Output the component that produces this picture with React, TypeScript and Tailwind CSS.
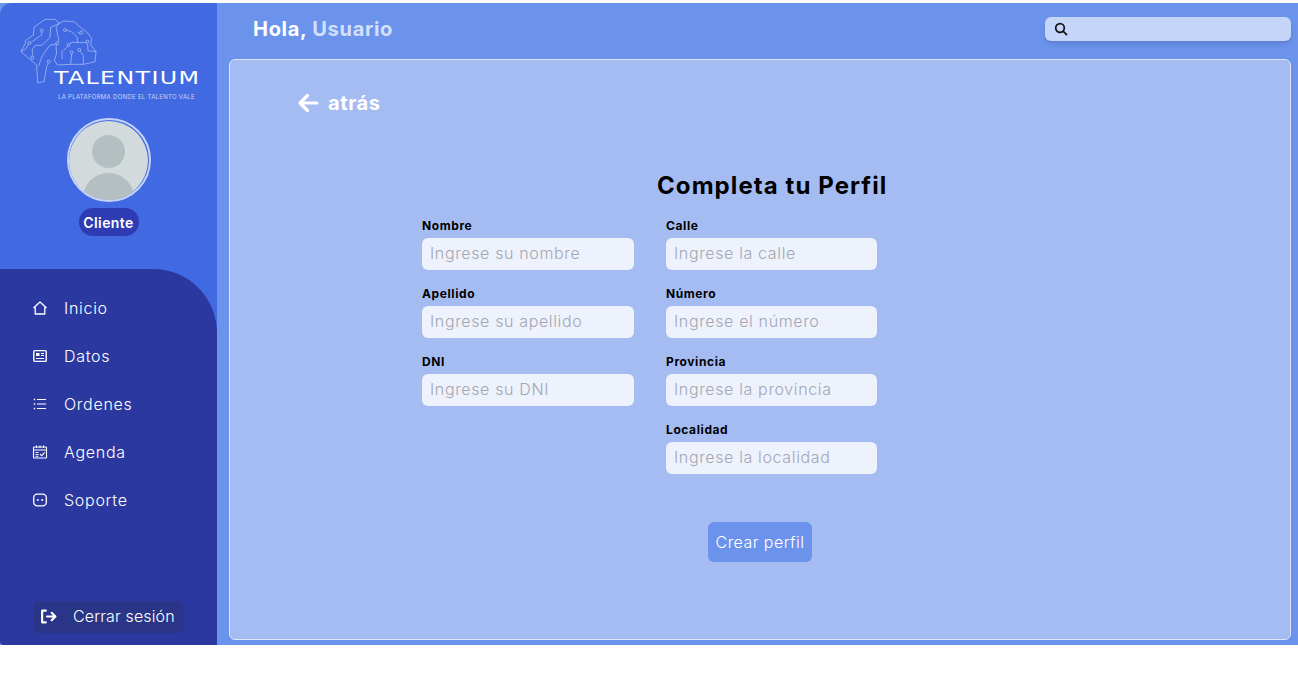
import { useState } from "react";

const font = { fontFamily: "Inter, 'Liberation Sans', sans-serif" };

function Brain() {
  return (
    <svg width="110" height="100" viewBox="0 0 330 300" fill="none" stroke="#d5e1fb" strokeWidth="1.6" strokeLinejoin="round" className="block">
      {/* contorno del lóbulo izquierdo y tallo */}
      <path d="M140 170 L132 215 L113 218 L110 165 L63 125 L76 100 L76 92 L100 75 L102 52 L135 28 L165 28 L178 40 L152 52 L150 82 L126 106 L106 106 L97 118 L97 140" />
      {/* contorno del lóbulo derecho */}
      <path d="M178 40 L190 33 L222 35 L245 55 L262 68 L275 85 L272 105 L288 125 L285 155 L265 160 L250 163 L212 163 L172 165 L163 150 L170 130 L168 110 L176 88 L168 52 L178 40" />
      {/* pistas internas */}
      <path d="M125 66 L125 74 L106 88 L94 96 M86 102 L76 118 L63 125" />
      <path d="M168 102 L150 106 L135 125 L125 142 L116 168" />
      <path d="M145 160 L140 170" />
      <path d="M199 60 L215 66 L232 82 L232 98 L262 98 M240 72 L232 66" />
      <path d="M207 104 L216 96 L232 98 M263 100 L264 122 L288 125" />
      <path d="M215 132 L212 163 M240 124 L250 136 L250 163 M190 122 L205 108 M186 122 L186 148" />
      <g fill="#4169e1">
        <circle cx="125" cy="62" r="4.5" />
        <circle cx="88" cy="99" r="4.5" />
        <circle cx="97" cy="143" r="4.5" />
        <circle cx="172" cy="100" r="4.5" />
        <circle cx="146" cy="155" r="4.5" />
        <circle cx="195" cy="60" r="4.5" />
        <circle cx="244" cy="68" r="4.5" />
        <circle cx="262" cy="95" r="4.5" />
        <circle cx="205" cy="105" r="4.5" />
        <circle cx="215" cy="127" r="4.5" />
        <circle cx="238" cy="120" r="4.5" />
      </g>
    </svg>
  );
}

function IconHome() {
  return (
    <svg width="16" height="16" viewBox="0 0 16 16" fill="none" stroke="white" strokeWidth="1.3">
      <path d="M1.5 8 L8 2 L14.5 8 M3.2 7 V14 H12.8 V7" strokeLinejoin="round" />
    </svg>
  );
}
function IconDatos() {
  return (
    <svg width="16" height="16" viewBox="0 0 16 16" fill="none" stroke="white">
      <rect x="1.8" y="2.6" width="12.4" height="10.8" rx="1" strokeWidth="1.4" />
      <rect x="4" y="5" width="3.5" height="3" fill="white" stroke="none" />
      <path d="M9 5.5 H12 M9 7.5 H12 M4 10.5 H12" strokeWidth="1" />
    </svg>
  );
}
function IconLista() {
  return (
    <svg width="16" height="16" viewBox="0 0 16 16" fill="none" stroke="white" strokeWidth="1.2">
      <path d="M5 3.5 H14 M5 8 H14 M5 12.5 H14" />
      <path d="M1.8 3.5 H3.2 M1.8 8 H3.2 M1.8 12.5 H3.2" strokeWidth="1.6" />
    </svg>
  );
}
function IconAgenda() {
  return (
    <svg width="16" height="16" viewBox="0 0 16 16" fill="none" stroke="white" strokeWidth="1.1">
      <rect x="1.5" y="3" width="13" height="11" rx="0.6" />
      <path d="M1.5 6 H14.5 M4.5 1.5 V4 M8 1.5 V4 M11.5 1.5 V4" />
      <path d="M3.5 8.5 H6.5 M3.5 10.5 H6.5 M3.5 12.3 H6.5" strokeWidth="0.9" />
      <path d="M8 10 L9.8 11.8 L12.6 8.3" />
    </svg>
  );
}
function IconSoporte() {
  return (
    <svg width="16" height="16" viewBox="0 0 16 16" fill="none" stroke="white" strokeWidth="1.3">
      <rect x="1.7" y="2.2" width="12.6" height="11.6" rx="3.6" />
      <circle cx="5.8" cy="8" r="1" fill="white" stroke="none" />
      <circle cx="10.2" cy="8" r="1" fill="white" stroke="none" />
    </svg>
  );
}

const menu = [
  { label: "Inicio", icon: <IconHome /> },
  { label: "Datos", icon: <IconDatos /> },
  { label: "Ordenes", icon: <IconLista /> },
  { label: "Agenda", icon: <IconAgenda /> },
  { label: "Soporte", icon: <IconSoporte /> },
];

function Field({ label, placeholder }: { label: string; placeholder: string }) {
  const [value, setValue] = useState("");
  return (
    <label className="flex flex-col h-[68px]">
      <span className="block h-[20px] text-[12px] leading-[16px] font-bold text-black tracking-[0.05em]">{label}</span>
      <input
        value={value}
        onChange={(e) => setValue(e.target.value)}
        placeholder={placeholder}
        className="h-[32px] w-full rounded-md bg-[#eef2fd] px-2 pb-[2px] text-[16px] font-light tracking-[0.04em] text-black outline-none placeholder:text-[#a3a7b3]"
      />
    </label>
  );
}

export default function App() {
  return (
    <div style={font} className="w-[1298px] h-[680px] overflow-hidden bg-white pt-[3px]">
      <div className="flex h-[642px] bg-[#6c93ec]">
        <aside className="flex h-full w-[217px] shrink-0 flex-col overflow-hidden rounded-tl-xl rounded-bl-[4px] bg-[#4169e1]">
          <div className="h-[266px] shrink-0">
            <div className="pt-[7px]">
              <Brain />
            </div>
            <div
              className="ml-[54px] -mt-[42px] h-[20px] origin-left scale-x-[1.32] text-[18px] leading-[20px] font-normal tracking-[1px] whitespace-nowrap text-white"
              style={{ fontFamily: "'DejaVu Sans', sans-serif" }}
            >
              TALENTIUM
            </div>
            <div className="ml-[58px] mt-[5px] text-[6px] leading-[8px] tracking-[0.05em] whitespace-nowrap text-[#c7d5f8]">
              LA PLATAFORMA DONDE EL TALENTO VALE
            </div>
            <div className="mx-auto mt-[17px] flex h-[84px] w-[84px] items-center justify-center rounded-full border-2 border-[#c5d4f8]">
              <div className="relative h-[79px] w-[79px] overflow-hidden rounded-full bg-[#d3dadc]">
                <div className="absolute left-[23px] top-[14px] h-[33px] w-[33px] rounded-full bg-[#b4bfc1]"></div>
                <div className="absolute left-[14px] top-[52px] h-[50px] w-[51px] rounded-full bg-[#b4bfc1]"></div>
              </div>
            </div>
            <div className="mx-auto mt-[6px] flex h-[28px] w-[60px] items-center justify-center rounded-full bg-[#2e3bb3] text-[14px] font-semibold tracking-[0.03em] text-white">
              Cliente
            </div>
          </div>
          <div className="flex flex-1 flex-col justify-between rounded-tr-[64px] bg-[#2b389f] pb-[12px] pl-[32px] pt-[15px]">
            <nav className="flex flex-col">
              {menu.map((m) => (
                <div key={m.label} className="flex h-[48px] items-center gap-[16px]">
                  <span className="flex w-[16px] justify-center">{m.icon}</span>
                  <span className="text-[16px] font-light tracking-[0.045em] text-white">{m.label}</span>
                </div>
              ))}
            </nav>
            <button className="ml-[1px] flex h-[32px] w-[151px] items-center rounded-md bg-[#2a3588] pb-[2px] pl-[7px] text-[16px] font-light text-white">
              <svg width="17" height="17" viewBox="0 0 16 16" fill="none" stroke="white" strokeWidth="2" strokeLinecap="round" strokeLinejoin="round">
                <path d="M5.5 2.5 H2 V13.5 H5.5 M6.5 8 H14.5 M11 4.5 L14.5 8 L11 11.5" />
              </svg>
              <span className="ml-[16px] whitespace-nowrap tracking-[0.008em]">Cerrar sesión</span>
            </button>
          </div>
        </aside>
        <main className="flex min-w-0 flex-1 flex-col pl-[12px] pr-[7px] pb-[5px]">
          <header className="flex h-[56px] shrink-0 items-center justify-between pb-[4px]">
            <h1 className="ml-[24px] text-[20px] font-bold tracking-[0.035em] text-white">
              Hola, <span className="text-[#d3e0fb]">Usuario</span>
            </h1>
            <div className="flex h-[24px] w-[246px] items-center rounded-md bg-[#c5d5f8] pl-[9px] shadow-md">
              <svg width="14" height="14" viewBox="0 0 14 14" fill="none" stroke="#111" strokeWidth="1.7" strokeLinecap="round">
                <circle cx="6" cy="6" r="4.3" />
                <path d="M9.3 9.3 L12.6 12.6" />
              </svg>
            </div>
          </header>
          <section className="flex-1 rounded-md border border-[#dbe5fb] bg-[#a5bcf3] pl-[67px]">
            <div className="mt-[30px] flex h-[26px] items-center gap-[9px] text-[20px] font-bold tracking-[0.03em] text-white">
              <svg width="22" height="20" viewBox="0 0 22 20" fill="none" stroke="white" strokeWidth="3.2" strokeLinecap="round" strokeLinejoin="round">
                <path d="M20 10 H3 M10.5 2.5 L3 10 L10.5 17.5" />
              </svg>
              <span>atrás</span>
            </div>
            <h2 className="ml-[360px] mt-[54px] w-[232px] whitespace-nowrap text-[24px] leading-[32px] font-bold tracking-[0.045em] text-black">
              Completa tu Perfil
            </h2>
            <div className="ml-[125px] mt-[16px] grid w-[455px] grid-cols-[212px_211px] gap-x-[32px]">
              <div>
                <Field label="Nombre" placeholder="Ingrese su nombre" />
                <Field label="Apellido" placeholder="Ingrese su apellido" />
                <Field label="DNI" placeholder="Ingrese su DNI" />
              </div>
              <div>
                <Field label="Calle" placeholder="Ingrese la calle" />
                <Field label="Número" placeholder="Ingrese el número" />
                <Field label="Provincia" placeholder="Ingrese la provincia" />
                <Field label="Localidad" placeholder="Ingrese la localidad" />
              </div>
            </div>
            <button className="ml-[411px] mt-[32px] block h-[40px] w-[104px] rounded-md bg-[#6c93ec] pb-[1px] text-[16px] font-light tracking-[0.028em] text-white">
              Crear perfil
            </button>
          </section>
        </main>
      </div>
    </div>
  );
}
